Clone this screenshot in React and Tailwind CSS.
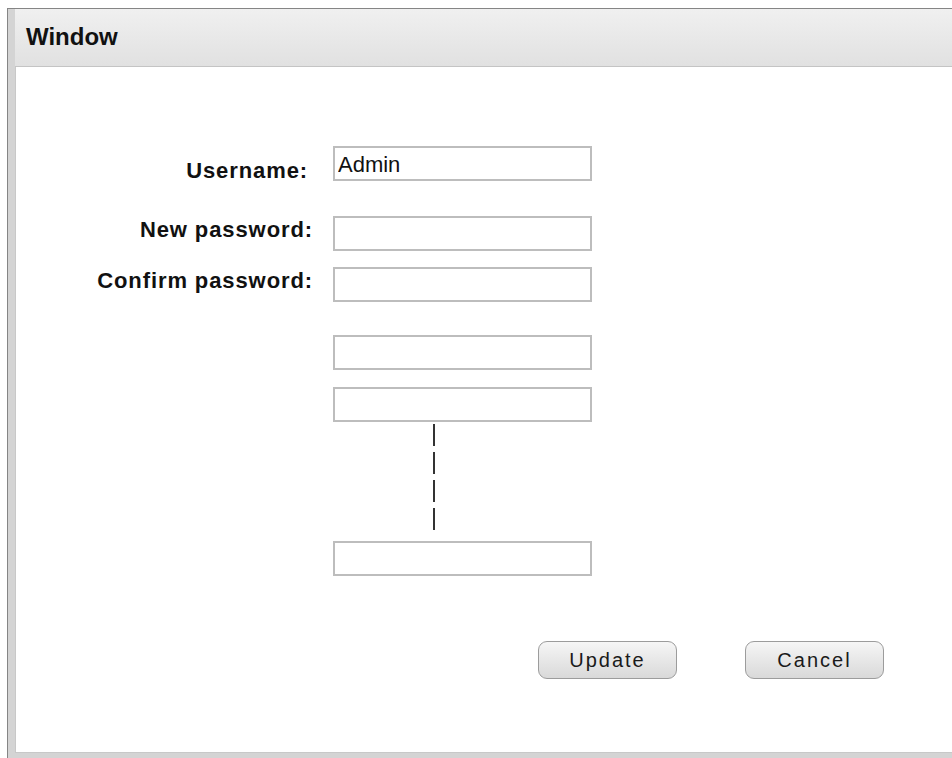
import React from 'react';

const labelFont = { fontFamily: '"Liberation Sans", Arial, sans-serif' };

function Field({ label, value = '', labelPad = 'pt-0', labelRight = 'pr-0', className = '' }) {
    return (
        <div className={`flex items-start ${className}`}>
            <div
                className={`w-[297px] shrink-0 text-right text-[22px] leading-[22px] font-bold tracking-[0.9px] text-[#111] ${labelPad} ${labelRight}`}
            >
                {label}
            </div>
            <input
                type="text"
                readOnly
                value={value}
                className="ml-[20px] w-[259px] h-[35px] border-2 border-[#bdbdbd] bg-white px-[3px] pt-[3px] text-[22px] text-[#111] outline-none"
            />
        </div>
    );
}

function Button({ children }) {
    return (
        <button className="w-[139px] h-[38px] rounded-[9px] border border-[#9c9c9c] bg-gradient-to-b from-[#f6f6f6] to-[#d9d9d9] text-[20px] tracking-[2px] text-[#1a1a1a]">
            {children}
        </button>
    );
}

export default function App() {
    return (
        <div className="w-[952px] h-[758px] overflow-hidden bg-white pt-[8px] pl-[7px]" style={labelFont}>
            <div className="h-[750px] flex flex-col border-t border-l border-[#858585] bg-[#d4d4d4] pl-[7px] pb-[5px]">
                {/* title bar */}
                <div className="h-[58px] shrink-0 border-b border-[#c4c4c4] bg-gradient-to-b from-[#f0f0f0] to-[#e1e1e1] pl-[11px] pt-[16px]">
                    <span className="text-[24px] leading-[24px] font-bold text-[#111]">Window</span>
                </div>

                {/* body */}
                <div className="flex-1 flex flex-col border-l border-b border-[#c8c8c8] bg-white pt-[79px]">
                    <Field label="Username:" value="Admin" labelPad="pt-[14px]" labelRight="pr-[5px]" />
                    <Field label="New password:" labelPad="pt-[3px]" className="mt-[34px]" />
                    <Field label="Confirm password:" labelPad="pt-[3px]" className="mt-[16px]" />
                    <Field label="" className="mt-[33px]" />
                    <Field label="" className="mt-[17px]" />

                    {/* dashed connector between the repeated rows */}
                    <div className="ml-[417px] mt-[2px] flex flex-col gap-[6px]">
                        <div className="w-[2px] h-[22px] bg-[#333]" />
                        <div className="w-[2px] h-[22px] bg-[#333]" />
                        <div className="w-[2px] h-[22px] bg-[#333]" />
                        <div className="w-[2px] h-[22px] bg-[#333]" />
                    </div>

                    <Field label="" className="mt-[11px]" />

                    <div className="mt-[65px] ml-[522px] flex gap-[68px]">
                        <Button>Update</Button>
                        <Button>Cancel</Button>
                    </div>
                </div>
            </div>
        </div>
    );
}
